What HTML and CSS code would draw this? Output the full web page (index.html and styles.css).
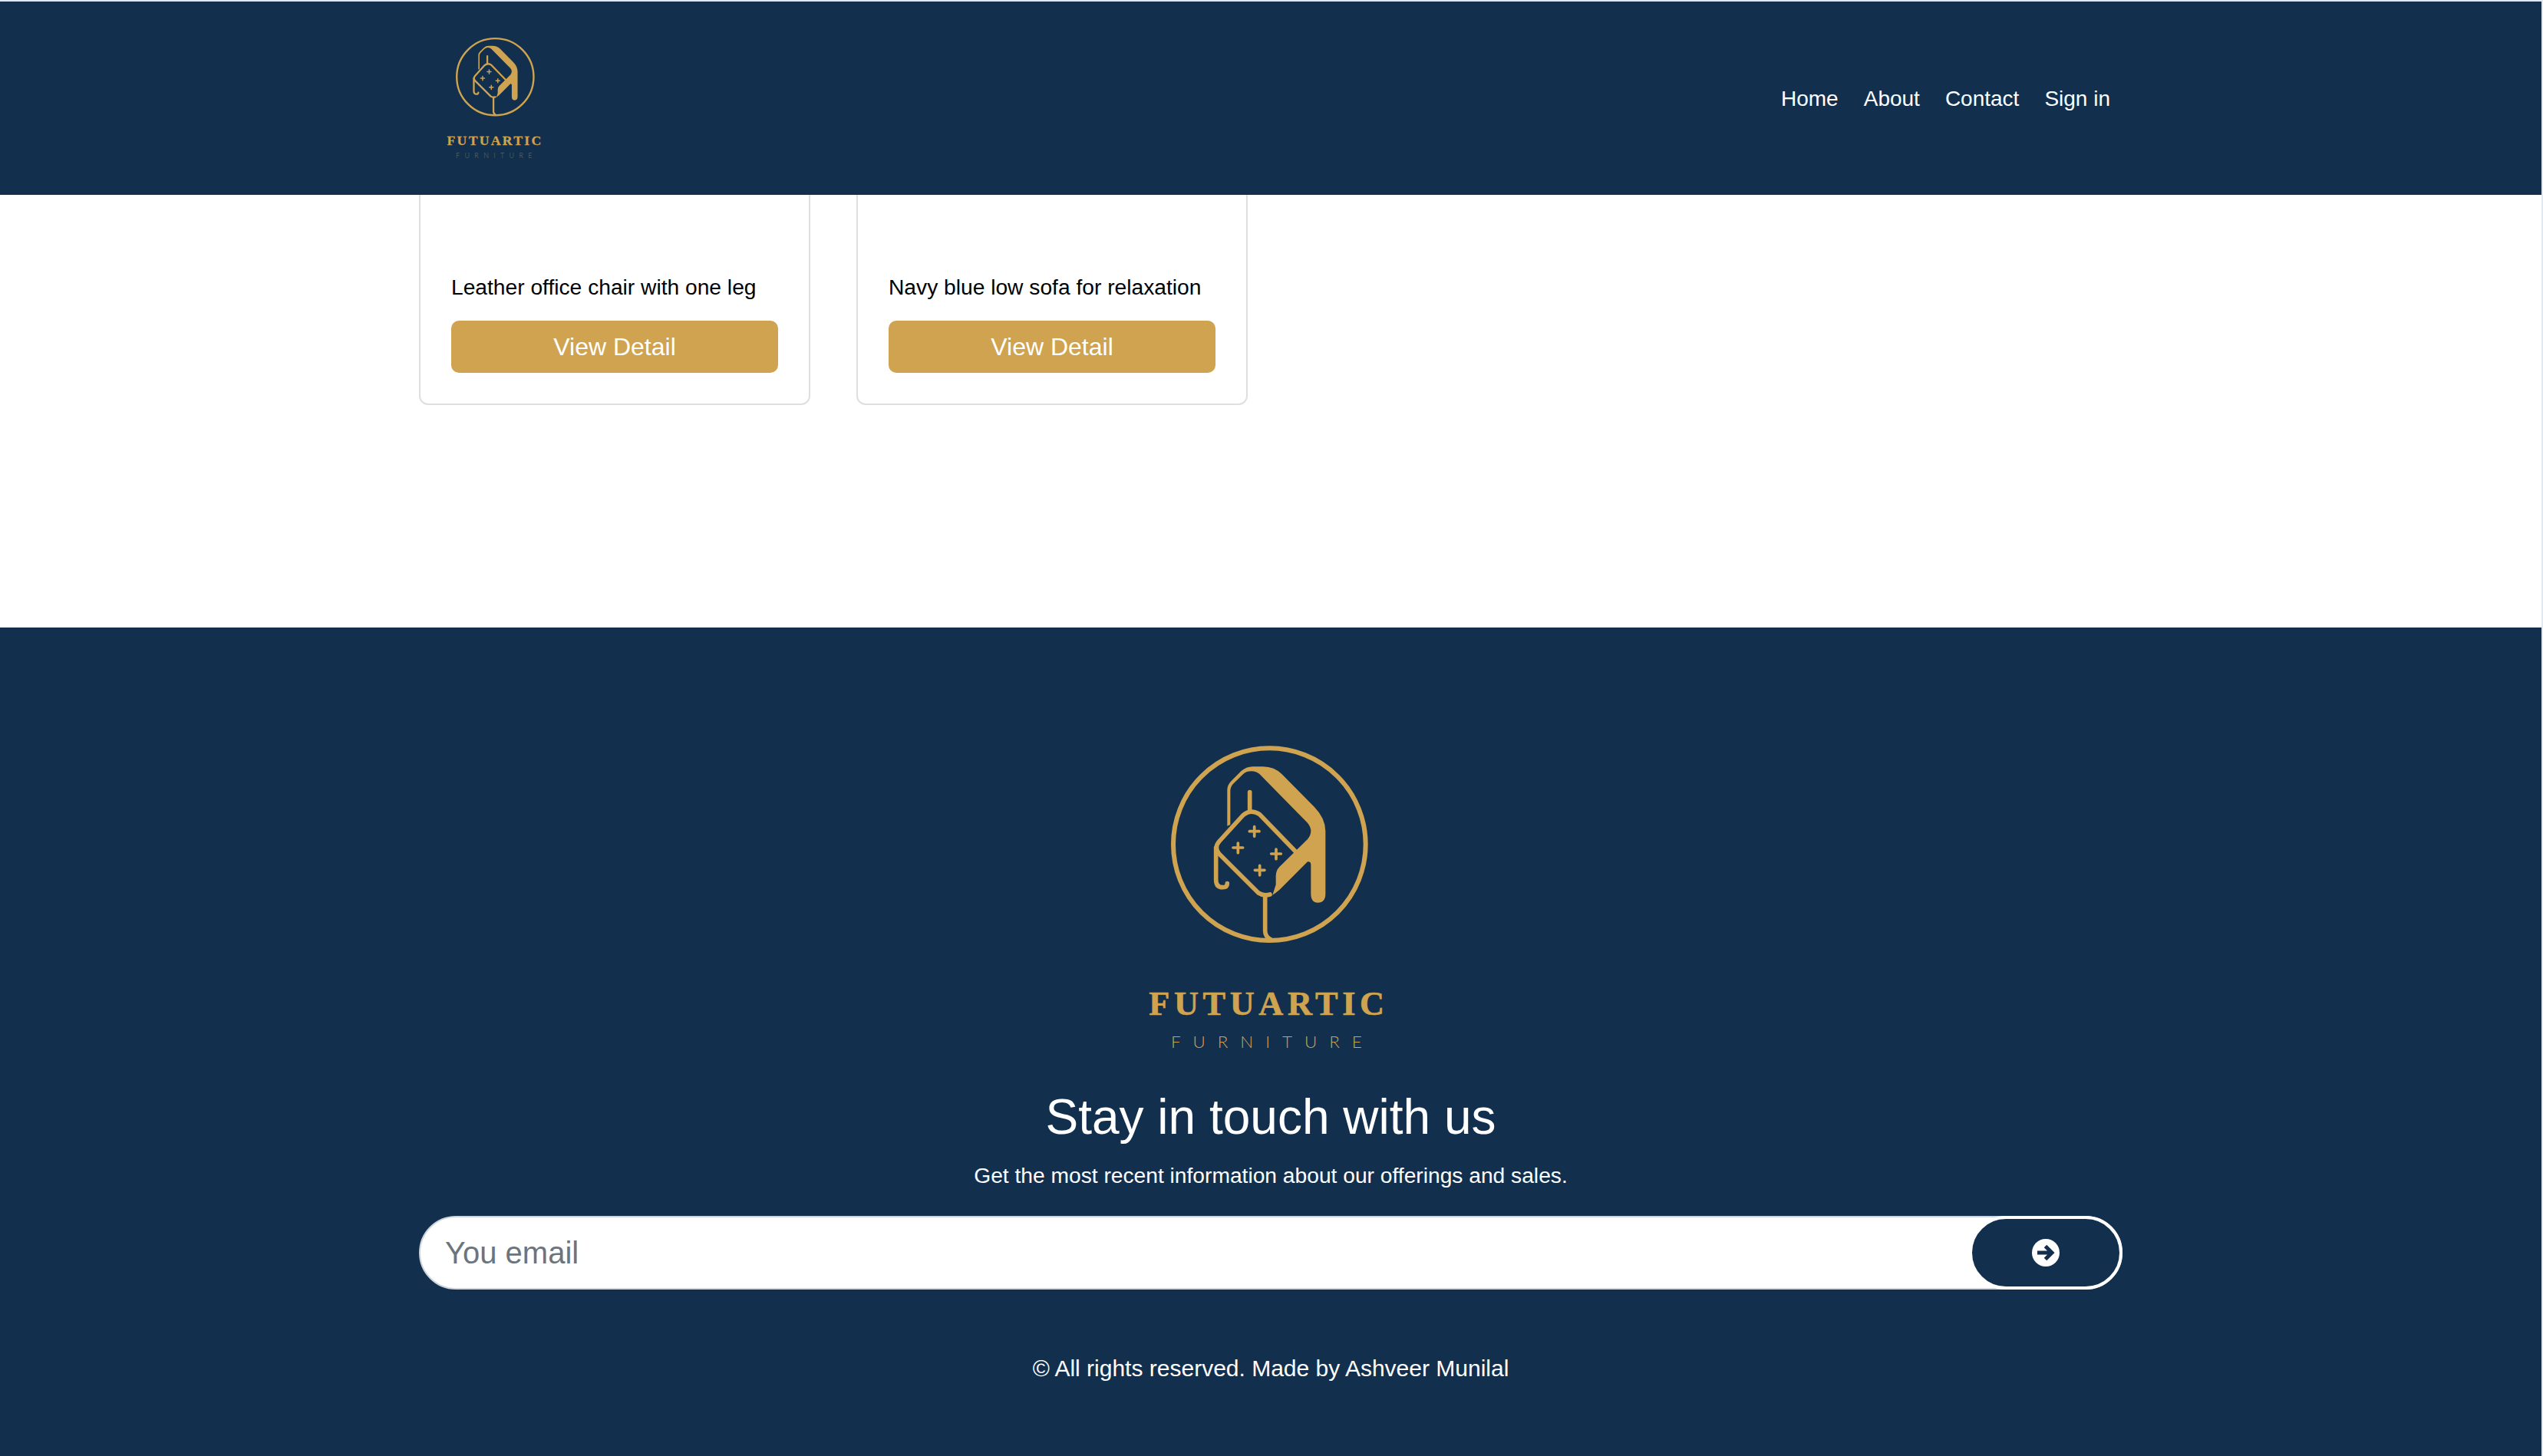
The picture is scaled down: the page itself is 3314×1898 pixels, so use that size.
FILE: index.html
```html
<!DOCTYPE html>
<html lang="en">
<head>
<meta charset="utf-8">
<title>Futuartic Furniture</title>
<link rel="stylesheet" href="styles.css">
</head>
<body>
<header class="site-header">
  <div class="container header-row">
    <a class="logo-small" href="#">
      <svg class="logo-small-svg" viewBox="48 0 1200 1380">
        <circle class="ring" cx="643" cy="482" r="376"/>
        <path class="solid" d="M478 410V270Q478 250 492 236L532 196Q552 178 578 178H618Q662 178 692 208L818 335Q862 380 862 430V675Q862 710 832 710Q805 710 805 675V562Q805 548 792 550L682 660Q668 672 655 680L668 640V605Q668 585 682 570L792 462Q818 430 792 398L605 208Q585 190 555 198Q545 202 535 212L500 247Q490 258 490 275V405Z"/>
        <path class="line" d="M745 510L605 365Q570 342 540 368L447 470Q425 495 447 520L600 672Q620 685 645 678"/>
        <path class="line" d="M566 278V345"/>
        <path class="line" d="M626 685V820Q626 845 650 855"/>
        <path class="line" d="M434 495V620Q434 650 460 650Q478 650 478 635"/>
        <path class="plus" d="M584 413V451M565 431H603M520 477V515M501 495H539M669 501V539M650 519H688M605 565V603M586 583H624"/>
        <text class="brand-name" x="172" y="1150" textLength="920">FUTUARTIC</text>
        <text class="brand-sub brand-sub-dim" x="258" y="1278" textLength="746">FURNITURE</text>
      </svg>
    </a>
    <nav class="nav">
      <a href="#">Home</a>
      <a href="#">About</a>
      <a href="#">Contact</a>
      <a href="#">Sign in</a>
    </nav>
  </div>
</header>

<main class="products">
  <div class="container product-row">
    <article class="card">
      <p class="card-title">Leather office chair with one leg</p>
      <a class="card-btn" href="#">View Detail</a>
    </article>
    <article class="card">
      <p class="card-title">Navy blue low sofa for relaxation</p>
      <a class="card-btn" href="#">View Detail</a>
    </article>
  </div>
</main>

<footer class="site-footer">
  <svg class="logo-large" viewBox="48 0 1200 1380">
    <circle class="ring" cx="643" cy="482" r="376"/>
    <path class="solid" d="M478 410V270Q478 250 492 236L532 196Q552 178 578 178H618Q662 178 692 208L818 335Q862 380 862 430V675Q862 710 832 710Q805 710 805 675V562Q805 548 792 550L682 660Q668 672 655 680L668 640V605Q668 585 682 570L792 462Q818 430 792 398L605 208Q585 190 555 198Q545 202 535 212L500 247Q490 258 490 275V405Z"/>
    <path class="line" d="M745 510L605 365Q570 342 540 368L447 470Q425 495 447 520L600 672Q620 685 645 678"/>
    <path class="line" d="M566 278V345"/>
    <path class="line" d="M626 685V820Q626 845 650 855"/>
    <path class="line" d="M434 495V620Q434 650 460 650Q478 650 478 635"/>
    <path class="plus" d="M584 413V451M565 431H603M520 477V515M501 495H539M669 501V539M650 519H688M605 565V603M586 583H624"/>
    <text class="brand-name" x="172" y="1150" textLength="920">FUTUARTIC</text>
    <text class="brand-sub" x="258" y="1278" textLength="746">FURNITURE</text>
  </svg>
  <h2 class="footer-title">Stay in touch with us</h2>
  <p class="footer-sub">Get the most recent information about our offerings and sales.</p>
  <form class="subscribe">
    <input class="subscribe-input" type="email" placeholder="You email">
    <button class="subscribe-btn" type="button" aria-label="Subscribe">
      <svg class="arrow" viewBox="0 0 36 36"><circle class="arrow-disc" cx="18" cy="18" r="18"/><path class="arrow-head" d="M7 18H25M17.5 9.5L26 18L17.5 26.5"/></svg>
    </button>
  </form>
  <p class="copyright">© All rights reserved. Made by Ashveer Munilal</p>
</footer>
</body>
</html>
```

FILE: styles.css
```css
* { box-sizing: border-box; }
html, body { margin: 0; padding: 0; }
body {
  padding: 2px 2px 0 0;
  background: #e2e8f0;
  font-family: "Liberation Sans", Arial, sans-serif;
  color: #000;
}
.container { width: 2220px; margin: 0 auto; }

.ring { fill: none; stroke: #cfa34f; stroke-width: 18; }
.solid { fill: #cfa34f; }
.line { fill: none; stroke: #cfa34f; stroke-width: 17; stroke-linecap: round; stroke-linejoin: round; }
.plus { fill: none; stroke: #cfa34f; stroke-width: 11; stroke-linecap: round; }
.brand-name { font-family: "Liberation Serif", serif; font-weight: 700; font-size: 133px; fill: #cfa34f; stroke: #cfa34f; stroke-width: 2px; }
.brand-sub { font-family: Lato, "Liberation Sans", sans-serif; font-weight: 300; font-size: 67px; fill: #cfa34f; }
.brand-sub-dim { fill: #77704f; }

.site-header { height: 252px; background: #12304e; }
.header-row { height: 100%; display: flex; align-items: center; justify-content: space-between; }
.logo-small { display: block; margin-left: 20px; line-height: 0; }
.logo-small-svg { width: 160px; height: 184px; }
.nav { display: flex; padding-top: 2px; }
.nav a { padding: 0 16.5px; font-size: 28px; line-height: 34px; color: #fff; text-decoration: none; }
.nav a:last-child { padding-right: 16px; }

.products { height: 564px; background: #fff; }
.product-row { display: flex; gap: 60px; }
.card {
  width: 510px;
  padding: 103px 40px 40px;
  border: 2px solid #dfdfdf;
  border-top: 0;
  border-radius: 0 0 12px 12px;
  background: #fff;
}
.card-title { margin: 0 0 27px; font-size: 28.2px; line-height: 34px; white-space: nowrap; }
.card-btn {
  display: block;
  height: 68px;
  border-radius: 10px;
  background: #cfa34f;
  color: #fff;
  font-size: 32px;
  line-height: 68px;
  text-align: center;
  text-decoration: none;
}

.site-footer {
  height: 1080px;
  padding-top: 122px;
  background: #12304e;
  color: #fff;
  display: flex;
  flex-direction: column;
  align-items: center;
}
.logo-large { width: 400px; height: 460px; flex: none; }
.footer-title { margin: 17px 0 0; font-size: 64px; line-height: 78px; font-weight: 400; }
.footer-sub { margin: 20px 0 0; font-size: 28.2px; line-height: 34px; }
.subscribe { display: flex; width: 2220px; height: 96px; margin-top: 36px; }
.subscribe-input {
  flex: 1;
  min-width: 0;
  height: 96px;
  padding: 0 32px;
  border: 2px solid #ced4da;
  border-radius: 48px;
  background: #fff;
  font-family: inherit;
  font-size: 40px;
  outline: 0;
}
.subscribe-input::placeholder { color: #6c757d; opacity: 1; }
.subscribe-btn {
  position: relative;
  flex: none;
  width: 200px;
  height: 96px;
  margin-left: -200px;
  padding: 0;
  border: 4px solid #fff;
  border-radius: 48px;
  background: #12304e;
  display: flex;
  align-items: center;
  justify-content: center;
}
.arrow { width: 36px; height: 36px; display: block; }
.arrow-disc { fill: #fff; }
.arrow-head { fill: none; stroke: #12304e; stroke-width: 5; stroke-linejoin: miter; }
.copyright { margin: 85px 0 0; font-size: 30px; line-height: 36px; }
```
